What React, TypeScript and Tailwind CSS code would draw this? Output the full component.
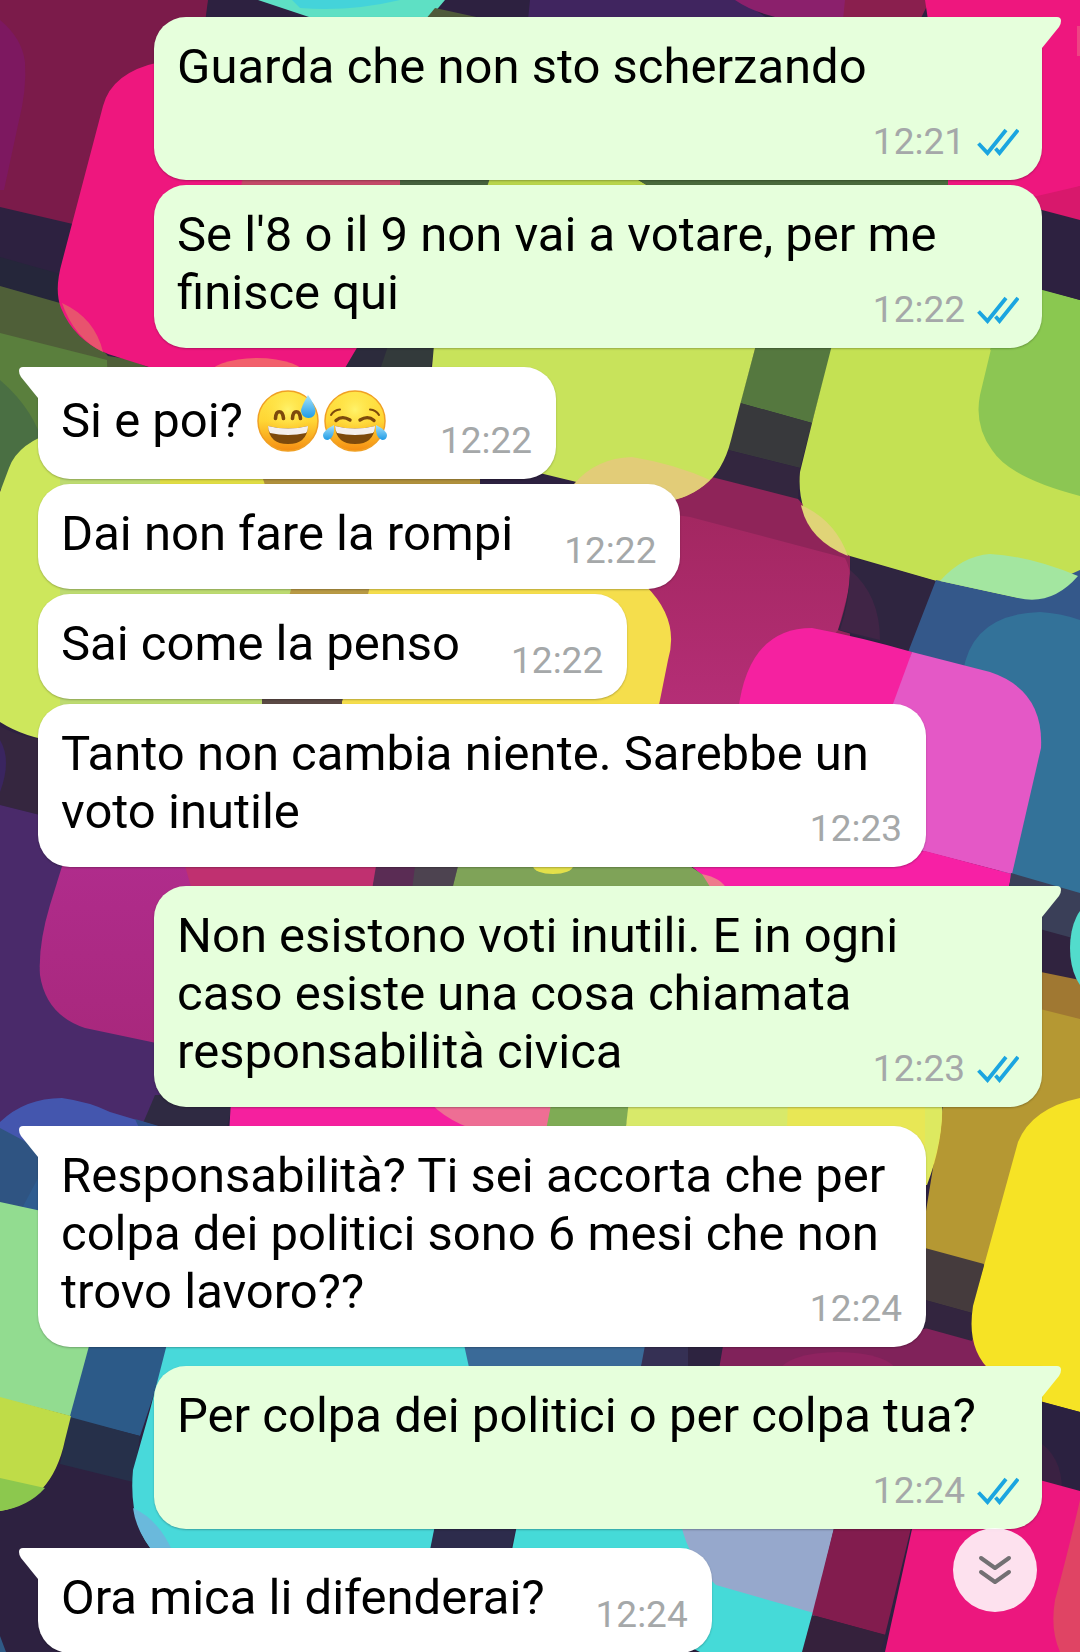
import React from 'react';
import clsx from 'clsx';

type EmojiName = 'sweat' | 'joy';

interface Message {
  id: number;
  text: string;
  time: string;
  sent?: boolean;
  first?: boolean;
  emojis?: EmojiName[];
}

const messages: Message[] = [
  { id: 1, text: 'Guarda che non sto scherzando', time: '12:21', sent: true, first: true },
  { id: 2, text: "Se l'8 o il 9 non vai a votare, per me finisce qui", time: '12:22', sent: true },
  { id: 3, text: 'Si e poi?', time: '12:22', first: true, emojis: ['sweat', 'joy'] },
  { id: 4, text: 'Dai non fare la rompi', time: '12:22' },
  { id: 5, text: 'Sai come la penso', time: '12:22' },
  { id: 6, text: 'Tanto non cambia niente. Sarebbe un voto inutile', time: '12:23' },
  {
    id: 7,
    text: 'Non esistono voti inutili. E in ogni caso esiste una cosa chiamata responsabilità civica',
    time: '12:23',
    sent: true,
    first: true
  },
  {
    id: 8,
    text: 'Responsabilità? Ti sei accorta che per colpa dei politici sono 6 mesi che non trovo lavoro??',
    time: '12:24',
    first: true
  },
  { id: 9, text: 'Per colpa dei politici o per colpa tua?', time: '12:24', sent: true, first: true },
  { id: 10, text: 'Ora mica li difenderai?', time: '12:24', first: true }
];

// Colourful rounded tiles behind the conversation
const Wallpaper: React.FC = () => (
  <svg
    className="absolute inset-0 h-full w-full"
    viewBox="0 0 1080 1652"
    preserveAspectRatio="xMidYMid slice"
    aria-hidden="true"
  >
    <defs>
      <linearGradient id="magenta" x1="0" y1="0" x2="0" y2="1">
        <stop offset="0" stopColor="#b02c8c" />
        <stop offset="1" stopColor="#a8287c" />
      </linearGradient>
      <linearGradient id="plum" x1="0" y1="0" x2="0" y2="1">
        <stop offset="0" stopColor="#a22760" />
        <stop offset="1" stopColor="#b82f7a" />
      </linearGradient>
    </defs>
    <rect width="1080" height="1652" fill="#2d2140" />

    {/* top strip */}
    <path d="M0 0H208L200 60L120 235L0 207Z" fill="#7b1b4a" />
    <path d="M0 20Q22 38 25 62Q27 90 18 125L4 190H0Z" fill="#7d1860" />
    <path d="M258 0H445L428 20H318Z" fill="#5ee0c4" />
    <path d="M292 0H400Q350 12 300 8Z" fill="#44d3da" />
    <path d="M435 8L490 20H425Z" fill="#4f5a3a" />
    <path d="M530 0H740L770 20H528Z" fill="#40255f" />
    <path d="M735 0H850L845 20H790Q755 14 735 0Z" fill="#8b206c" />
    <path d="M845 0H930L920 20H843Z" fill="#8a1f4e" />
    <path d="M925 0H1080V220L1042 210L940 190V100Z" fill="#ee177e" />
    <path d="M1042 209Q1058 192 1080 186V220Z" fill="#d8186c" />
    <path d="M1077 26H1080V56H1077Z" fill="#ee4383" />

    {/* left pink tile */}
    <path d="M0 257L64 275L58 303L0 286Z" fill="#25263a" />
    <path d="M0 286L60 303L108 356L400 400V470H0Z" fill="#4f5f38" />
    <path d="M0 333L107 360L110 470H0Z" fill="#5a7f3d" />
    <path d="M0 380Q35 410 45 450L0 490Z" fill="#4a6f43" />
    <path d="M105 350L160 372H430L436 340H340Z" fill="#2c2b3c" />
    <path d="M390 340H436L430 370H380Z" fill="#333a3b" />
    <path d="M160 62Q112 72 103 106L62 262Q54 290 61 308Q74 340 108 354L152 368H345L358 346L400 180Z" fill="#ee177e" />
    <path d="M62 303Q95 318 103 352Q74 338 62 303Z" fill="#e8536e" />
    <ellipse cx="257" cy="377" rx="50" ry="19" fill="#f2606c" />
    <path d="M243 178H402V190H240Z" fill="#c44a68" />
    <path d="M400 178H492V190H400Z" fill="#46623d" />
    <path d="M490 178H635L655 190H486Z" fill="#b9d54c" />
    <path d="M635 178H948V190H655Z" fill="#4a6b3c" />

    {/* lime tiles */}
    <path d="M756 345H833L812 423L740 403Z" fill="#55783f" />
    <path d="M740 403L812 423L800 468L728 450Z" fill="#38393c" />
    <path d="M728 450L800 468L798 500L700 474Z" fill="#33263f" />
    <path d="M700 474L798 499L850 556V640L740 720H600L640 500L570 480Z" fill="#8f2459" />
    <path d="M640 510L690 517L845 558Q852 572 850 585L838 630L740 740H600Z" fill="url(#plum)" />
    <path d="M434 345H756L740 405L731 440Q723 472 703 486Q685 500 660 502L560 478L425 445Z" fill="#c8e35b" />
    <path d="M574 484Q596 458 632 457Q675 464 710 480Q690 500 660 502Z" fill="#e2cc78" />
    <path d="M832 345H1080V576Q1050 606 1018 598L940 582L850 556Q795 530 800 472L814 415Z" fill="#c4e153" />
    <path d="M992 345H1080V496Q1010 478 992 450Q974 425 980 395Z" fill="#8cc653" />
    <path d="M1010 280L1080 300V350H990Z" fill="#8ac850" />
    <path d="M1030 200L1080 213V300L1020 284Z" fill="#2d2140" />
    <path d="M1020 200L1080 186V220L1042 210Z" fill="#d8186c" />
    <path d="M801 505Q835 520 848 556Q808 540 801 505Z" fill="#e0d477" />
    <path d="M850 557L935 581L912 652L838 630Q852 590 850 557Z" fill="#2f2540" />
    <path d="M850 570Q880 595 880 640L840 630Q850 600 850 570Z" fill="#402546" />

    {/* blue and orchid tiles, right side */}
    <path d="M936 580L1018 598L1080 570V894L1000 872L905 660Z" fill="#34588a" />
    <path d="M963 672Q972 614 1040 612Q1060 613 1080 620V894L1000 872Z" fill="#337299" />
    <path d="M940 581Q962 556 990 554Q1030 556 1078 576Q1052 606 1018 598Z" fill="#a3e6a0" />
    <path d="M738 712Q748 628 812 628Q860 637 912 652L895 712Z" fill="#f521a0" />
    <path d="M912 652L990 672Q1044 690 1041 748L1012 874L900 845L890 712Z" fill="#e458c6" />
    <path d="M925 851L1012 874L1008 890H720L690 865Z" fill="#f720a5" />
    <path d="M1011 873L1080 893V960H1000Z" fill="#3a3f58" />
    <path d="M1036 928L1080 940V984H1036Z" fill="#30233f" />
    <path d="M1036 971L1080 980V1030H1036Z" fill="#a07832" />
    <path d="M1036 1008L1080 1019V1275L980 1265L920 1248L944 1100Z" fill="#b59833" />
    <ellipse cx="1092" cy="948" rx="22" ry="44" fill="#52dccc" />

    {/* lime and yellow tiles, left side */}
    <path d="M60 430Q18 442 9 468L0 492V722Q25 738 60 742H262L300 590L280 470Z" fill="#cde75c" />
    <path d="M60 478H165V486H60ZM60 588H292V597H60ZM60 698H262V707H60Z" fill="#bddb71" />
    <path d="M160 476H265V488H160Z" fill="#e0dd44" />
    <path d="M262 476H480V488H266Z" fill="#b0903c" />
    <path d="M292 586H372L368 600H288Z" fill="#b99a44" />
    <path d="M370 586H646Q680 620 668 660L658 710H340Z" fill="#f5de4c" />
    <path d="M262 698H342V708H262Z" fill="#5c4a45" />

    {/* purple area */}
    <path d="M0 726Q20 738 60 742V820L0 805Z" fill="#35263f" />
    <path d="M0 740Q12 760 0 792Z" fill="#3a2560" />
    <path d="M0 805L60 820L160 860V1130H0Z" fill="#4a2a6a" />
    <path d="M64 860L50 905Q38 945 40 975Q46 1015 85 1028L180 1048L195 860Z" fill="url(#magenta)" />
    <path d="M185 866H378L372 890H192Z" fill="#c03070" />
    <path d="M376 866H420V890H372Z" fill="#5a2c54" />
    <path d="M415 866H458L452 890H412Z" fill="#4d4350" />
    <path d="M458 866H690L725 890H452Z" fill="#7fa358" />
    <ellipse cx="553" cy="866" rx="20" ry="8" fill="#e3e04a" />
    <path d="M702 874Q722 878 727 890H712Z" fill="#ee7a8c" />
    <path d="M155 1095H235L225 1135H138Z" fill="#2f2a42" />
    <path d="M231 1100H440L480 1135H229Z" fill="#f5209e" />
    <path d="M428 1100H556L545 1135H490Q445 1122 428 1100Z" fill="#ee6e94" />
    <path d="M552 1100H632L624 1135H545Z" fill="#7fab55" />
    <path d="M629 1100H790V1135H625Z" fill="#d8e96a" />
    <path d="M788 1100H942Q944 1140 927 1185H785Z" fill="#e8e755" />
    <path d="M925 1100H942Q944 1140 925 1185Z" fill="#dde960" />

    {/* blue and mint tiles, lower left */}
    <path d="M0 1122Q25 1098 62 1098Q90 1102 110 1112L170 1130L60 1230H0Z" fill="#4456ae" />
    <path d="M0 1128L60 1160V1240H0Z" fill="#2f5482" />
    <path d="M45 1165L20 1212L60 1220V1160Z" fill="#2e5c90" />
    <path d="M135 1119L172 1130H140Z" fill="#30508a" />
    <path d="M80 1340H172L140 1436L65 1417Z" fill="#2c5a88" />
    <path d="M70 1417L140 1436L133 1482L60 1464Z" fill="#26304a" />
    <path d="M0 1202L60 1215L92 1335L70 1416L0 1398Z" fill="#92dc90" />
    <path d="M0 1397L71 1416L65 1440Q52 1502 0 1511Z" fill="#bfdc48" />
    <path d="M0 1478L45 1488Q28 1507 0 1511Z" fill="#8cc84e" />
    <path d="M168 1340H460Q470 1350 472 1375L430 1555H156Q128 1525 133 1470L150 1410Z" fill="#48d9da" />
    <path d="M133 1508Q160 1520 174 1555H156Q136 1532 133 1508Z" fill="#6ab9dc" />
    <path d="M463 1340H648L640 1372H470Z" fill="#3a6a98" />
    <path d="M646 1340H690V1372H640Z" fill="#353054" />
    <path d="M688 1340H724L718 1372H688Z" fill="#2d2340" />
    <path d="M927 1328L975 1340L990 1375H718L724 1340L920 1330Z" fill="#80225a" />
    <ellipse cx="838" cy="1372" rx="58" ry="20" fill="#8f2360" />

    {/* lower right */}
    <path d="M925 1248L984 1264L972 1313L925 1300Z" fill="#453b3d" />
    <path d="M925 1300L972 1313V1341L925 1328Z" fill="#33253f" />
    <path d="M1080 1098Q1032 1108 1018 1142L985 1262L973 1306Q966 1350 992 1372Q1015 1395 1042 1402L1080 1412Z" fill="#f6e325" />
    <path d="M1036 1400L1080 1412V1492L1036 1480Z" fill="#2b2140" />
    <path d="M1036 1440Q1062 1455 1062 1490L1036 1480Z" fill="#3a2142" />
    <path d="M1036 1479L1080 1491V1652H885L914 1520Z" fill="#ec177e" />
    <path d="M1080 1500Q1066 1560 1055 1600Q1050 1630 1060 1652H1080Z" fill="#e04464" />
    <path d="M436 1520H518L508 1560H428Z" fill="#2d2c4c" />
    <path d="M518 1520H690L720 1580L816 1610L804 1652H700L510 1560Z" fill="#45dad8" />
    <path d="M680 1520H836L814 1613L716 1585Q688 1560 680 1520Z" fill="#96a8cc" />
    <path d="M836 1520H913L885 1635L812 1615Z" fill="#821c4e" />
    <path d="M812 1615L886 1635L880 1652H802Z" fill="#35213c" />
    <path d="M0 1636L6 1652H0Z" fill="#2f5a86" />
  </svg>
);

const Emoji: React.FC<{ name: EmojiName }> = ({ name }) => (
  <svg viewBox="0 0 67 66" className="inline-block h-[66px] w-[67px] align-[-17px]" aria-hidden="true">
    <defs>
      <linearGradient id={`${name}-face`} x1="0" y1="0" x2="0" y2="1">
        <stop offset="0" stopColor="#ffe64a" />
        <stop offset="0.5" stopColor="#ffd534" />
        <stop offset="1" stopColor="#f58d12" />
      </linearGradient>
      <radialGradient id={`${name}-glow`} cx="0.5" cy="0.32" r="0.5">
        <stop offset="0" stopColor="#fff36b" />
        <stop offset="1" stopColor="#ffdf3a" stopOpacity="0" />
      </radialGradient>
      <linearGradient id={`${name}-drop`} x1="0" y1="0" x2="0" y2="1">
        <stop offset="0" stopColor="#a8e3fa" />
        <stop offset="1" stopColor="#1f9be6" />
      </linearGradient>
    </defs>
    <circle cx="33" cy="33" r="30" fill={`url(#${name}-face)`} stroke="#f0a024" strokeWidth="1.5" />
    <circle cx="33" cy="31" r="26" fill={`url(#${name}-glow)`} />
    <path d="M13 38Q33 43 53 38Q52 56 33 56Q14 56 13 38Z" fill="#7d4a0c" />
    <path d="M13 38Q33 43 53 38Q53 43 51 45Q33 49 15 45Q13 42 13 38Z" fill="#f4f0ee" />
    {name === 'sweat' ? (
      <>
        <path
          d="M20.5 30.5C21 21.5 27.5 21.5 28.500 30.5M37.5 30.5C38 21.5 44.500 21.5 45.500 30.5"
          fill="none"
          stroke="#7d4a0c"
          strokeWidth="3.6"
          strokeLinecap="round"
        />
        <path d="M53 7Q46 19 46 23Q47 30 53.5 30Q60 30 60.5 23Q60 17 53 7Z" fill={`url(#${name}-drop)`} />
      </>
    ) : (
      <>
        <path
          d="M14 32.5Q20 27 28 32M38 32Q46 27 52 32.5"
          fill="none"
          stroke="#7d4a0c"
          strokeWidth="3.4"
          strokeLinecap="round"
        />
        <path
          d="M9 27Q12 22 18 21.5M48 21.5Q54 22 57 27"
          fill="none"
          stroke="#7d4a0c"
          strokeWidth="2"
          strokeLinecap="round"
        />
        <path d="M12 37Q2 42 1 47Q1 52 6 52Q13 50 12 37Z" fill={`url(#${name}-drop)`} />
        <path d="M54 37Q64 42 65 47Q65 52 60 52Q53 50 54 37Z" fill={`url(#${name}-drop)`} />
      </>
    )}
  </svg>
);

const ReadTicks: React.FC = () => (
  <svg viewBox="0 0 42 28" className="h-7 w-[42px]" fill="none" stroke="#1ba5e0" strokeWidth="3.8" aria-hidden="true">
    <path d="M1.5 15.5L10.5 25L29 2" />
    <path d="M18.5 20.5L22.5 25L41 2" />
  </svg>
);

// Small corner that points out of the first bubble of a group
const Tail: React.FC<{ sent?: boolean }> = ({ sent }) => (
  <svg
    viewBox="0 0 20 31"
    className={clsx(
      'absolute top-0 h-[31px] w-5',
      sent ? 'left-full -scale-x-100 fill-[#e6ffdc]' : 'right-full fill-white'
    )}
    aria-hidden="true"
  >
    <path d="M20 0H5Q1 0 1 4Q1 7 3 10L20 31Z" />
  </svg>
);

const Bubble: React.FC<{ message: Message }> = ({ message }) => {
  const { text, time, sent, first, emojis } = message;

  return (
    <li
      className={clsx(
        'relative flow-root w-fit max-w-[888px] rounded-[32px] pt-[21px] pr-8 pb-[17px] pl-[23px] shadow-[0_1px_2px_rgba(0,0,0,0.25)]',
        sent ? 'self-end bg-[#e6ffdc]' : 'self-start bg-white',
        first && (sent ? 'rounded-tr-none' : 'rounded-tl-none'),
        first ? 'mt-[19px] first:mt-0' : 'mt-[5px]'
      )}
    >
      {first && <Tail sent={sent} />}
      <span className="text-[49px] leading-[58px] text-black">
        {text}
        {emojis && ' '}
        {emojis?.map((name) => (
          <Emoji key={name} name={name} />
        ))}
      </span>
      <span
        className={clsx(
          'float-right flex items-center gap-3 text-[37px] leading-[42px] text-[#a5a8a9]',
          sent ? '-mr-[9px] ml-6' : '-mr-2 ml-[51px]',
          emojis ? 'mt-8' : 'mt-[25px]'
        )}
      >
        <time>{time}</time>
        {sent && <ReadTicks />}
      </span>
    </li>
  );
};

const App: React.FC = () => {
  return (
    <main className="relative h-screen overflow-hidden bg-[#2d2140] font-['Roboto',sans-serif]">
      <Wallpaper />
      <ol className="relative flex flex-col px-[38px] pt-[17px]">
        {messages.map((message) => (
          <Bubble key={message.id} message={message} />
        ))}
      </ol>

      {/* Scroll to bottom */}
      <button
        type="button"
        title="Vai in fondo"
        className="absolute right-[43px] bottom-10 flex size-[84px] items-center justify-center rounded-full bg-white/87"
      >
        <svg
          viewBox="0 0 34 30"
          className="h-[30px] w-[34px]"
          fill="none"
          stroke="#737073"
          strokeWidth="4"
          strokeLinecap="round"
          strokeLinejoin="round"
          aria-hidden="true"
        >
          <path d="M3 3L17 13L31 3" />
          <path d="M3 17L17 27L31 17" />
        </svg>
      </button>
    </main>
  );
};

export default App;
